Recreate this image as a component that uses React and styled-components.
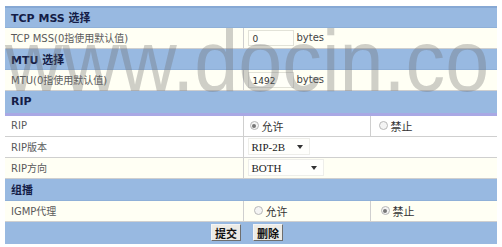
import React from "react";
import styled, { createGlobalStyle } from "styled-components";

const GlobalStyle = createGlobalStyle`
  body {
    margin: 0;
    background: #ffffff;
    font-family: "DejaVu Sans", "Noto Sans CJK SC", sans-serif;
  }
`;

const Page = styled.div`
  position: relative;
  width: 502px;
  height: 247px;
  padding: 6px 5px 0;
  box-sizing: border-box;
  overflow: hidden;
`;

const Table = styled.table`
  width: 492px;
  border-collapse: collapse;
  table-layout: fixed;
  font-size: 10px;
`;

const HeadCell = styled.td`
  height: ${(p) => p.$h || 21}px;
  padding: 0 6px;
  background: #98b9e1;
  border-top: ${(p) => (p.$top ? "2px solid #86a8d4" : "none")};
  border-bottom: ${(p) => (p.$lavender ? "3px solid #a9a8e4" : "1px solid #8fb0d8")};
  color: #141c46;
  font-weight: bold;
  font-size: 11px;
  font-family: "DejaVu Sans", "Noto Sans CJK SC", sans-serif;
  box-sizing: border-box;
`;

const Row = styled.tr`
  background: ${(p) => (p.$cream ? "#fffff4" : "#ffffff")};
`;

const Label = styled.td`
  height: ${(p) => p.$h || 21}px;
  padding: 0 6px;
  color: #5a5a5a;
  border: 1px solid #cfcfcf;
  border-left: none;
  box-sizing: border-box;
  white-space: nowrap;
  font-size: 10px;
`;

const Value = styled.td`
  padding: 0 4px;
  color: #444;
  border: 1px solid #cfcfcf;
  border-right: none;
  box-sizing: border-box;
  white-space: nowrap;
`;

const TextBox = styled.span`
  display: inline-block;
  width: 46px;
  height: 16px;
  line-height: 16px;
  padding-left: 4px;
  box-sizing: border-box;
  border: 1px solid #e2e2d8;
  background: #fffff8;
  color: #333;
  vertical-align: middle;
  font-size: 9px;
`;

const Unit = styled.span`
  margin-left: 3px;
  color: #444;
  vertical-align: middle;
`;

const Select = styled.span`
  display: inline-flex;
  align-items: center;
  justify-content: space-between;
  width: ${(p) => p.$w}px;
  height: 17px;
  padding: 0 6px 0 3px;
  box-sizing: border-box;
  border: 1px solid #eeeeea;
  background: #fffffc;
  font-family: "Liberation Serif", "Noto Sans CJK SC", serif;
  font-size: 11px;
  color: #222;
  vertical-align: middle;
`;

const Caret = styled.span`
  width: 0;
  height: 0;
  border-left: 3px solid transparent;
  border-right: 3px solid transparent;
  border-top: 4px solid #333;
`;

const RadioWrap = styled.span`
  display: inline-flex;
  align-items: center;
  gap: 3px;
  margin-left: ${(p) => p.$ml || 4}px;
  color: #333;
  font-size: 11px;
  font-family: "Noto Sans CJK SC", sans-serif;
`;

const Dot = styled.span`
  width: 9px;
  height: 9px;
  border-radius: 50%;
  border: 1px solid #b8b8b8;
  background: #f4f4f4;
  box-sizing: border-box;
  display: inline-flex;
  align-items: center;
  justify-content: center;
  &::after {
    content: "";
    width: 4px;
    height: 4px;
    border-radius: 50%;
    background: ${(p) => (p.$on ? "#777" : "transparent")};
  }
`;

const ButtonBar = styled.td`
  height: 23px;
  background: #98b9e1;
  text-align: center;
  padding: 2px 8px 0 0;
  vertical-align: top;
  box-sizing: border-box;
`;

const Btn = styled.span`
  display: inline-block;
  height: 17px;
  line-height: 16px;
  padding: 0 3px;
  margin: 0 6px;
  box-sizing: border-box;
  border: 1px solid #6e6e6e;
  border-top-color: #f4f4f4;
  border-left-color: #f4f4f4;
  background: #ecebe6;
  font-family: "Noto Sans CJK SC", sans-serif;
  font-weight: bold;
  font-size: 11px;
  color: #111;
`;

const Watermark = styled.div`
  position: absolute;
  left: 5px;
  top: 17px;
  font-family: "Liberation Sans", Arial, sans-serif;
  font-size: 88px;
  line-height: 1;
  color: rgba(110, 110, 110, 0.33);
  transform: scaleX(0.9);
  transform-origin: left top;
  pointer-events: none;
  white-space: nowrap;
`;

const Radio = ({ on, label, ml }) => (
  <RadioWrap $ml={ml}>
    <Dot $on={on} />
    {label}
  </RadioWrap>
);

export default function App() {
  return (
    <Page>
      <GlobalStyle />
      <Table>
        <colgroup>
          <col style={{ width: 238 }} />
          <col style={{ width: 127 }} />
          <col style={{ width: 127 }} />
        </colgroup>
        <tbody>
          <tr>
            <HeadCell colSpan={3} $h={20} $top>TCP MSS 选择</HeadCell>
          </tr>
          <Row $cream>
            <Label>TCP MSS(0指使用默认值)</Label>
            <Value colSpan={2}>
              <TextBox>0</TextBox>
              <Unit>bytes</Unit>
            </Value>
          </Row>
          <tr>
            <HeadCell colSpan={3}>MTU 选择</HeadCell>
          </tr>
          <Row $cream>
            <Label>MTU(0指使用默认值)</Label>
            <Value colSpan={2}>
              <TextBox>1492</TextBox>
              <Unit>bytes</Unit>
            </Value>
          </Row>
          <tr>
            <HeadCell colSpan={3} $h={24} $lavender>RIP</HeadCell>
          </tr>
          <Row>
            <Label $h={22}>RIP</Label>
            <Value>
              <Radio on label="允许" ml={2} />
            </Value>
            <Value>
              <Radio label="禁止" ml={4} />
            </Value>
          </Row>
          <Row>
            <Label>RIP版本</Label>
            <Value colSpan={2}>
              <Select $w={62}>
                RIP-2B <Caret />
              </Select>
            </Value>
          </Row>
          <Row $cream>
            <Label>RIP方向</Label>
            <Value colSpan={2}>
              <Select $w={76}>
                BOTH <Caret />
              </Select>
            </Value>
          </Row>
          <tr>
            <HeadCell colSpan={3} $h={22}>组播</HeadCell>
          </tr>
          <Row $cream>
            <Label>IGMP代理</Label>
            <Value>
              <Radio label="允许" ml={6} />
            </Value>
            <Value>
              <Radio on label="禁止" ml={6} />
            </Value>
          </Row>
          <tr>
            <ButtonBar colSpan={3}>
              <Btn>提交</Btn>
              <Btn>删除</Btn>
            </ButtonBar>
          </tr>
        </tbody>
      </Table>
      <Watermark>www.docin.co</Watermark>
    </Page>
  );
}
